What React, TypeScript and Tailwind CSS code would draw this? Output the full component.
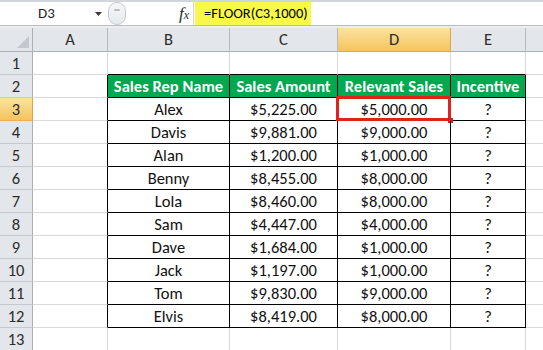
import React from "react";

const FONT = "font-[Carlito,Calibri,Lato,'Open_Sans',sans-serif]";

const COLS = [
  { key: "A", width: "w-[75px]" },
  { key: "B", width: "w-[122px]" },
  { key: "C", width: "w-[108px]" },
  { key: "D", width: "w-[113px]" },
  { key: "E", width: "w-[75px]" },
];

const HEADERS = ["Sales Rep Name", "Sales Amount", "Relevant Sales", "Incentive"];

const DATA = [
  ["Alex", "$5,225.00", "$5,000.00"],
  ["Davis", "$9,881.00", "$9,000.00"],
  ["Alan", "$1,200.00", "$1,000.00"],
  ["Benny", "$8,455.00", "$8,000.00"],
  ["Lola", "$8,460.00", "$8,000.00"],
  ["Sam", "$4,447.00", "$4,000.00"],
  ["Dave", "$1,684.00", "$1,000.00"],
  ["Jack", "$1,197.00", "$1,000.00"],
  ["Tom", "$9,830.00", "$9,000.00"],
  ["Elvis", "$8,419.00", "$8,000.00"],
];

function FormulaBar() {
  return (
    <div className="flex h-[26px] border-t-2 border-b border-t-[#d2d5da] border-b-[#b7bcc3] bg-white">
      <div className="flex w-[108px] shrink-0 items-center">
        <span className="pl-[38px] text-[15px] text-[#1e1e1e]">D3</span>
        <svg className="ml-auto mr-[6px]" width="7" height="4" viewBox="0 0 7 4">
          <path d="M0 0h7L3.5 4z" fill="#3a3a3a" />
        </svg>
      </div>
      <div className="flex w-[18px] shrink-0 items-start justify-center rounded-full border border-[#c5c9cf] bg-gradient-to-b from-[#f6f7f9] to-[#e6e9ed] pt-[6px]">
        <span className="h-[2px] w-[6px] rounded bg-[#b8bcc2]" />
      </div>
      <div className="flex w-[67px] shrink-0 items-center justify-end pr-[4px]">
        <span className="font-['Liberation_Serif',serif] text-[17px] italic leading-none text-[#2a2a2a]">
          f<span className="text-[12px]">x</span>
        </span>
      </div>
      <div className="flex flex-1 items-stretch border-l border-[#d4d7dc]">
        <div className="ml-[1px] flex w-[116px] items-center bg-[#f8f84a] pl-[9px] text-[14.5px] text-black">
          =FLOOR(C3,1000)
        </div>
      </div>
    </div>
  );
}

function ColumnHeader() {
  return (
    <div className="flex h-[24px] text-[16.5px] text-[#2c2c2c]">
      <div className="relative w-[33px] shrink-0 border-r border-b border-[#aab0b8] bg-[#e3e6ea]">
        <svg className="absolute bottom-[3px] right-[3px]" width="12" height="12" viewBox="0 0 12 12">
          <path d="M12 0V12H0z" fill="#c4c8ce" />
        </svg>
      </div>
      {COLS.map((c) =>
        c.key === "D" ? (
          <div
            key={c.key}
            className={`${c.width} flex shrink-0 items-center justify-center border-r border-b border-r-[#e9a53d] border-b-[#f0a03a] bg-gradient-to-b from-[#fbe2a0] to-[#f5c45a]`}
          >
            {c.key}
          </div>
        ) : (
          <div
            key={c.key}
            className={`${c.width} flex shrink-0 items-center justify-center border-r border-b border-r-[#b4bac1] border-b-[#aab0b8] bg-[#e3e6ea]`}
          >
            {c.key}
          </div>
        )
      )}
      <div className="flex-1 border-b border-[#aab0b8] bg-[#e3e6ea]" />
    </div>
  );
}

function RowHeader({ n }: { n: number }) {
  const active = n === 3;
  return (
    <div
      className={`flex w-[33px] shrink-0 items-center justify-center border-r border-b ${
        active
          ? "border-r-[#f0a03a] border-b-[#e9b15a] bg-gradient-to-b from-[#fbe2a0] to-[#f5c45a]"
          : "border-r-[#aab0b8] border-b-[#c5c9cf] bg-[#e3e6ea]"
      } text-[16.5px] text-[#2c2c2c]`}
    >
      {n}
    </div>
  );
}

function Row({ n, children }: { n: number; children: React.ReactNode }) {
  return (
    <div className="flex h-[23px]">
      <RowHeader n={n} />
      {children}
      <div className="flex-1 border-b border-[#d9d9d9]" />
    </div>
  );
}

export default function App() {
  return (
    <div className={`${FONT} h-[350px] w-[543px] overflow-hidden bg-white`}>
      <FormulaBar />
      <div className="h-[2px] bg-[#eceef1]" />
      <ColumnHeader />

      <Row n={1}>
        <div className="w-[75px] shrink-0 border-r border-b border-[#d9d9d9]" />
        <div className="w-[122px] shrink-0 border-r border-b border-r-[#d9d9d9] border-b-black" />
        <div className="w-[108px] shrink-0 border-r border-b border-r-[#d9d9d9] border-b-black" />
        <div className="w-[113px] shrink-0 border-r border-b border-r-[#d9d9d9] border-b-black" />
        <div className="w-[75px] shrink-0 border-r border-b border-r-[#d9d9d9] border-b-black" />
      </Row>

      <Row n={2}>
        <div className="w-[75px] shrink-0 border-r border-b border-r-black border-b-[#d9d9d9]" />
        {HEADERS.map((h, i) => (
          <div
            key={h}
            className={`${COLS[i + 1].width} flex shrink-0 items-center justify-center border-r border-b border-black bg-[#00a84f] text-[16.5px] font-bold text-white`}
          >
            {h}
          </div>
        ))}
      </Row>

      {DATA.map((r, idx) => {
        const n = idx + 3;
        return (
          <Row key={n} n={n}>
            <div className="w-[75px] shrink-0 border-r border-b border-r-black border-b-[#d9d9d9]" />
            <div className="flex w-[122px] shrink-0 items-center justify-center border-r border-b border-black text-[16.5px] text-[#111]">
              {r[0]}
            </div>
            <div className="flex w-[108px] shrink-0 items-center justify-center border-r border-b border-black text-[16.5px] text-[#111]">
              {r[1]}
            </div>
            <div className="relative flex w-[113px] shrink-0 items-center justify-center border-r border-b border-black text-[16.5px] text-[#111]">
              {r[2]}
              {n === 3 && (
                <>
                  <div className="absolute -top-[2px] -left-[2px] -right-[1px] -bottom-[1px] border-[3px] border-[#e3201f]" />
                  <div className="absolute -right-[3px] -bottom-[3px] h-[5px] w-[5px] bg-[#d11f1c]" />
                </>
              )}
            </div>
            <div className="flex w-[75px] shrink-0 items-center justify-center border-r border-b border-black text-[16.5px] text-[#111]">
              ?
            </div>
          </Row>
        );
      })}

      <Row n={13}>
        <div className="w-[75px] shrink-0 border-r border-b border-[#d9d9d9]" />
        <div className="w-[122px] shrink-0 border-r border-b border-[#d9d9d9]" />
        <div className="w-[108px] shrink-0 border-r border-b border-[#d9d9d9]" />
        <div className="w-[113px] shrink-0 border-r border-b border-[#d9d9d9]" />
        <div className="w-[75px] shrink-0 border-r border-b border-[#d9d9d9]" />
      </Row>
    </div>
  );
}
